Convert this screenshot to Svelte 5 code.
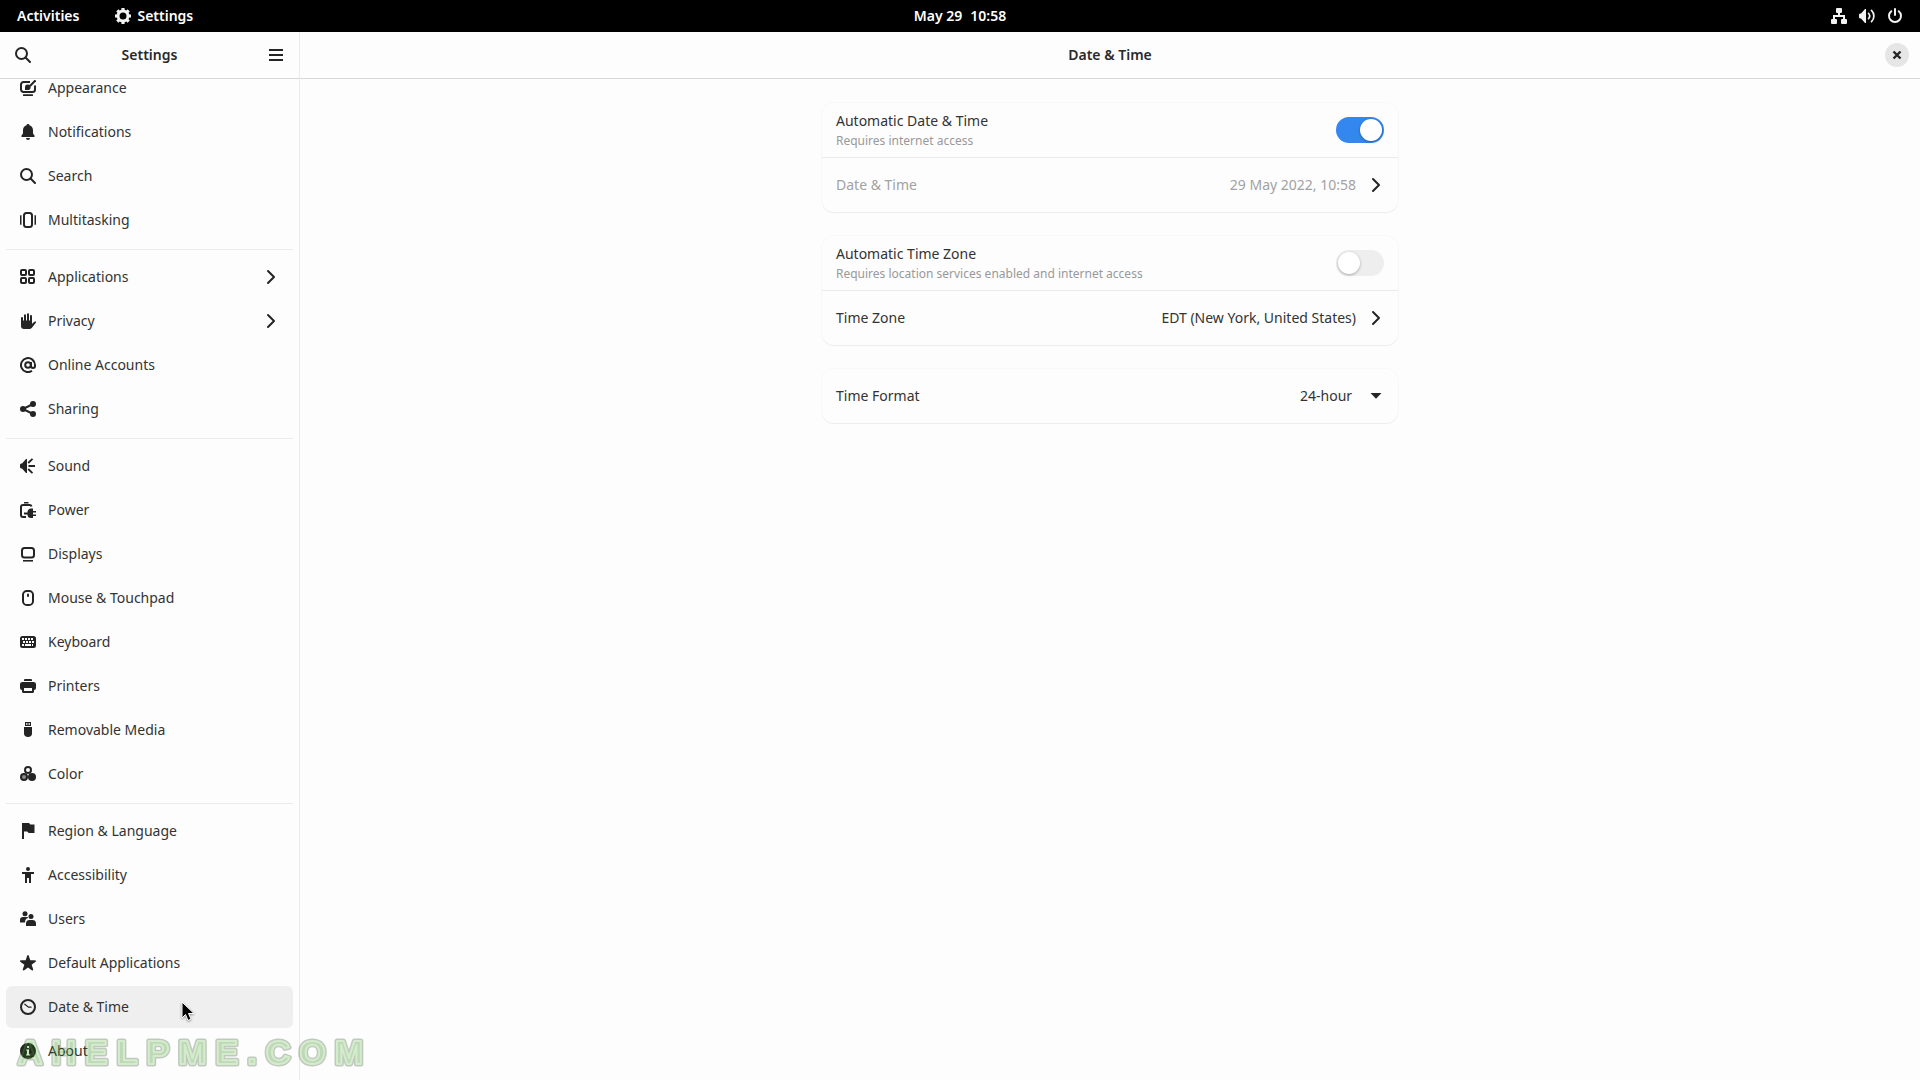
<script lang="ts">
  type Item = { icon: string; label: string; submenu?: boolean };

  const groups: Item[][] = [
    [
      { icon: "appearance", label: "Appearance" },
      { icon: "bell", label: "Notifications" },
      { icon: "search", label: "Search" },
      { icon: "multitasking", label: "Multitasking" },
    ],
    [
      { icon: "apps", label: "Applications", submenu: true },
      { icon: "hand", label: "Privacy", submenu: true },
      { icon: "at", label: "Online Accounts" },
      { icon: "share", label: "Sharing" },
    ],
    [
      { icon: "sound", label: "Sound" },
      { icon: "battery", label: "Power" },
      { icon: "display", label: "Displays" },
      { icon: "mouse", label: "Mouse & Touchpad" },
      { icon: "keyboard", label: "Keyboard" },
      { icon: "printer", label: "Printers" },
      { icon: "usb", label: "Removable Media" },
      { icon: "color", label: "Color" },
    ],
    [
      { icon: "flag", label: "Region & Language" },
      { icon: "accessibility", label: "Accessibility" },
      { icon: "users", label: "Users" },
      { icon: "star", label: "Default Applications" },
      { icon: "clock", label: "Date & Time" },
      { icon: "info", label: "About" },
    ],
  ];

  let selected = $state("Date & Time");
  let autoDate = $state(true);
  let autoZone = $state(false);
  let timeFormat = $state("24-hour");

  const line = 'fill="none" stroke="currentColor"';
  const thick = line + ' stroke-width="2"';

  // 16x16 symbolic icons
  const icons: Record<string, string> = {
    appearance: `<path ${thick} d="M10 2H3.500A2.500 2.500 0 0 0 1 4.500v5A2.500 2.500 0 0 0 3.500 12h9A2.500 2.500 0 0 0 15 9.500V5.500"/><path d="M3.500 14.300h9a.900.900 0 0 1 0 1.700h-9a.900.900 0 0 1 0-1.700zM5 10V7.200A2.800 2.800 0 0 1 10.600 7.200 2.800 2.800 0 0 1 7.800 10z"/><path ${thick} d="M10 6 15.500.300"/>`,
    bell: `<path d="M8 0a1.500 1.500 0 0 0-1.500 1.200C4.400 1.900 3 3.700 3 6v3.500l-1.500 2V13h13v-1.500L13 9.500V6c0-2.300-1.400-4.100-3.500-4.800A1.500 1.500 0 0 0 8 0zM6 14h4a2 2 0 0 1-4 0z"/>`,
    search: `<circle ${thick} cx="6.500" cy="6.500" r="5.500"/><path ${thick} stroke-linecap="round" d="M10.800 10.800 15 15"/>`,
    multitasking: `<rect ${thick} x="4" y="1" width="8" height="14" rx="2.500"/><path d="M0 3.500 1.500 3v10L0 12.500zM16 3.500 14.500 3v10l1.500-.500z"/>`,
    apps: `<g ${thick}><rect x="1" y="1" width="5" height="5" rx="1"/><rect x="9" y="1" width="5" height="5" rx="1"/><rect x="1" y="9" width="5" height="5" rx="1"/><rect x="9" y="9" width="5" height="5" rx="1"/></g>`,
    hand: `<path ${thick} stroke-linecap="round" d="M2 5v7M5 2.300V11M8 1.200V10M11 3v8"/><path d="M1 7.500h11v3.200c1.300-.500 1.500-1.700 3-2.200h1v1l-3.500 4.500c-1 1.400-2 2-3.500 2H4a3 3 0 0 1-3-3z"/>`,
    at: `<circle ${thick} cx="8" cy="8" r="2.800"/><path ${thick} d="M11 5v4a2 2 0 0 0 4 0V8a7 7 0 1 0-3 5.800"/>`,
    share: `<circle cx="13" cy="3" r="3"/><circle cx="3" cy="8" r="3"/><circle cx="13" cy="13" r="3"/><path ${thick} d="m13 3-10 5 10 5"/>`,
    sound: `<path d="M0 6.500 1 5.500h1L6 1h1v14H6l-4-4.500H1l-1-1z"/><path ${line} stroke-width="1.800" d="M8.200 5 12.500.800M8.500 8H15M8.200 11l4.300 4.200"/>`,
    battery: `<path d="M4 0h4.500v1.500H4z"/><path ${thick} d="M11.500 4.500A2 2 0 0 0 9.500 3H3a2 2 0 0 0-2 2v8a2 2 0 0 0 2 2h3"/><path d="M4 10.500h3.500A3.500 3.500 0 0 1 11 6.500h2V9h3v1.500h-3v2h3V14h-3v2h-2a3.500 3.500 0 0 1-3.500-3.500H4z"/>`,
    display: `<rect ${thick} x="2" y="2" width="12" height="9.500" rx="2.500"/><path d="M3 14h10v1.600H3z"/>`,
    mouse: `<rect ${thick} x="3" y="1" width="10" height="14" rx="3.800"/><path ${thick} stroke-linecap="round" d="M8 4.500V6"/>`,
    keyboard: `<path fill-rule="evenodd" d="M2.500 2h11A2.500 2.500 0 0 1 16 4.500v7a2.500 2.500 0 0 1-2.500 2.500h-11A2.500 2.500 0 0 1 0 11.500v-7A2.500 2.500 0 0 1 2.500 2zM2 4v2h2V4zm3 0v2h2V4zm3 0v2h2V4zm3 0v2h2V4zM3 7v2h2V7zm3 0v2h2V7zm3 0v2h2V7zm3 0v2h2V7zM2 10v2h2v-2zm3 0v2h6v-2zm7 0v2h1v-2z"/>`,
    printer: `<path fill-rule="evenodd" d="M5 1h6a1 1 0 0 1 1 1v1H4V2a1 1 0 0 1 1-1zM2.500 4h11A2.500 2.500 0 0 1 16 6.500V10a2 2 0 0 1-2 2v1.500A1.500 1.500 0 0 1 12.500 15h-9A1.500 1.500 0 0 1 2 13.500V12a2 2 0 0 1-2-2V6.500A2.500 2.500 0 0 1 2.500 4zM4 10v3h8v-3z"/>`,
    usb: `<path fill-rule="evenodd" d="M5 0h6v4H5zm1 1.200v1.600h1.500V1.200zm2.500 0v1.600H10V1.200zM4 5h8v6.500c0 2-1.500 3.500-4 3.500s-4-1.500-4-3.500z"/>`,
    color: `<circle ${thick} cx="8" cy="4" r="3"/><circle cx="4" cy="11" r="3" fill="#8a8a8a" stroke="currentColor" stroke-width="2"/><circle cx="12" cy="11" r="4"/>`,
    flag: `<path d="M2 0h7c.500 0 .700 1.500 1.500 1.500h4V10H9c-1 0-1-1.500-2-1.500H4V16H2z"/>`,
    accessibility: `<circle cx="8" cy="2" r="2"/><path d="M2 5h12v2h-3v9H9v-5H7v5H5V7H2z"/>`,
    users: `<circle cx="5" cy="2.700" r="2.500"/><circle cx="11" cy="5.500" r="2.500"/><path d="M0 11.500V9a3 3 0 0 1 3-3h4c.500 0 1 .300 1 1-2 .500-3 2-3 4.500zM6 15v-2.500A3.500 3.500 0 0 1 9.500 9h3a3.500 3.500 0 0 1 3.500 3.500V15z"/>`,
    star: `<path d="M8 0c.600 0 .800.400 2.300 5.300 5.200 0 5.700.100 5.700.700 0 .500-.400.900-4.400 3.700 1.700 4.800 1.800 5.400 1.400 5.700-.500.300-1 .100-5-2.900-4 3-4.500 3.200-5 2.900-.400-.300-.300-.900 1.400-5.700C.400 6.900 0 6.500 0 6c0-.600.500-.700 5.700-.700C7.200.400 7.400 0 8 0z"/>`,
    clock: `<circle ${thick} cx="8" cy="8" r="7"/><path ${line} stroke-width="1.300" stroke-linecap="round" d="m4.800 5.300 3.700 2.900H11"/>`,
    info: `<path fill-rule="evenodd" d="M8 0a8 8 0 1 1 0 16A8 8 0 0 1 8 0zM7 3v2h2V3zM6 6.500v1h1v4H6v1h4v-1H9v-5z"/>`,
    menu: `<path d="M1 2h14v2H1zM1 7h14v2H1zM1 12h14v2H1z"/>`,
    close: `<path ${line} stroke-width="2.400" d="m4.500 4.500 7 7M11.500 4.500l-7 7"/>`,
    next: `<path ${thick} stroke-linecap="round" stroke-linejoin="round" d="m5 2 6 6-6 6"/>`,
    down: `<path d="M2.500 5h11L8 10.800z"/>`,
    gear: `<circle cx="8" cy="8" r="5" ${line} stroke-width="3"/><path ${line} stroke-width="3.200" d="M8 0v3M8 13v3M0 8h3M13 8h3M2.300 2.300l2 2M11.700 11.700l2 2M2.300 13.700l2-2M11.700 4.300l2-2"/>`,
    network: `<path d="M6 0h4a1 1 0 0 1 1 1v3a1 1 0 0 1-1 1H9v2h5v4h1a1 1 0 0 1 1 1v3a1 1 0 0 1-1 1h-4a1 1 0 0 1-1-1v-3a1 1 0 0 1 1-1h1V9H4v2h1a1 1 0 0 1 1 1v3a1 1 0 0 1-1 1H1a1 1 0 0 1-1-1v-3a1 1 0 0 1 1-1h1V7h5V5H6a1 1 0 0 1-1-1V1a1 1 0 0 1 1-1z"/>`,
    volume: `<path d="M0 6.500 1 5.500h1L6 1h1v14H6l-4-4.500H1l-1-1z"/><path ${line} stroke-width="1.700" stroke-linecap="round" d="M9.500 5.300a4 4 0 0 1 0 5.400M12.500 2.300c3.200 3.200 3.200 8.200 0 11.400"/>`,
    shutdown: `<path ${thick} stroke-linecap="round" d="M8 1v6M4.300 3.200a6 6 0 1 0 7.400 0"/>`,
  };
</script>

{#snippet icon(name: string)}
  <svg class="icon" viewBox="0 0 16 16" aria-hidden="true">{@html icons[name]}</svg>
{/snippet}

<div class="desktop">
  <header class="panel">
    <div class="panel-left">
      <button class="panel-button">Activities</button>
      <button class="panel-button">{@render icon("gear")} Settings</button>
    </div>
    <button class="panel-button clock"><span>May 29</span><span>10:58</span></button>
    <button class="panel-button status" aria-label="System menu">
      {@render icon("network")}
      {@render icon("volume")}
      {@render icon("shutdown")}
    </button>
  </header>

  <div class="window">
    <aside class="sidebar">
      <div class="headerbar">
        <button class="flat" aria-label="Search">{@render icon("search")}</button>
        <h1>Settings</h1>
        <button class="flat" aria-label="Menu">{@render icon("menu")}</button>
      </div>
      <nav class="list">
        {#each groups as group, i}
          {#if i > 0}<hr />{/if}
          {#each group as item}
            <a
              href="#{item.icon}"
              class:selected={item.label === selected}
              onclick={() => (selected = item.label)}
            >
              {@render icon(item.icon)}
              <span>{item.label}</span>
              {#if item.submenu}{@render icon("next")}{/if}
            </a>
          {/each}
        {/each}
      </nav>
    </aside>

    <main class="content">
      <div class="headerbar">
        <h2>Date &amp; Time</h2>
        <button class="close" aria-label="Close">{@render icon("close")}</button>
      </div>

      <div class="page">
        <section class="card">
          <label class="row">
            <span class="text two-line">
              <span>Automatic Date &amp; Time</span>
              <small>Requires internet access</small>
            </span>
            <input class="switch" type="checkbox" role="switch" bind:checked={autoDate} />
          </label>
          <button class="row" disabled={autoDate}>
            <span class="text">Date &amp; Time</span>
            <span class="value">29 May 2022, 10:58</span>
            {@render icon("next")}
          </button>
        </section>

        <section class="card">
          <label class="row">
            <span class="text two-line">
              <span>Automatic Time Zone</span>
              <small>Requires location services enabled and internet access</small>
            </span>
            <input class="switch" type="checkbox" role="switch" bind:checked={autoZone} />
          </label>
          <button class="row" disabled={autoZone}>
            <span class="text">Time Zone</span>
            <span class="value">EDT (New York, United States)</span>
            {@render icon("next")}
          </button>
        </section>

        <section class="card">
          <label class="row">
            <span class="text">Time Format</span>
            <select bind:value={timeFormat}>
              <option>24-hour</option>
              <option>AM / PM</option>
            </select>
            {@render icon("down")}
          </label>
        </section>
      </div>
    </main>
  </div>

  <svg class="cursor" viewBox="0 0 14 21" aria-hidden="true">
    <path d="M1 1v16l3.500-3.500L7 19.500l3-1.500-2.500-5.500H13z" />
  </svg>
  <svg class="watermark" aria-hidden="true">
    <g class="mark-outline"><text id="mark" x="4" y="32">AHELPME.COM</text></g>
    <use class="mark-body" href="#mark" />
  </svg>
</div>

<style>
  :global(body) {
    background: #fdfdfd;
  }

  .desktop {
    display: flex;
    flex-direction: column;
    height: 100vh;
    overflow: hidden;
    color: #333;
    font: 14px/20px "Noto Sans", sans-serif;
  }

  button,
  select {
    border: 0;
    padding: 0;
    background: none;
    color: inherit;
    font: inherit;
  }

  .icon {
    flex: none;
    width: 16px;
    height: 16px;
    fill: currentColor;
    color: #242424;
  }

  /* ========== Top panel ========== */
  .panel {
    display: grid;
    grid-template-columns: 1fr auto 1fr;
    flex: none;
    height: 32px;
    padding: 0 17px;
    background: #000;
  }

  .panel-left {
    display: flex;
    gap: 36px;
  }

  .panel-button {
    display: flex;
    align-items: center;
    gap: 6px;
    color: #fff;
    font-weight: 600;
  }

  .panel-button .icon {
    color: #f2f2f2;
  }

  .panel-button.clock {
    gap: 8px;
  }

  .panel-button.status {
    justify-self: end;
    gap: 12px;
  }

  /* ========== Window ========== */
  .window {
    display: flex;
    flex: 1;
    min-height: 0;
  }

  .headerbar {
    display: flex;
    align-items: center;
    justify-content: space-between;
    flex: none;
    box-sizing: border-box;
    height: 47px;
    border-bottom: 1px solid #d8d8d8;
  }

  h1,
  h2 {
    margin: 0;
    color: #2a2a2a;
    font-size: 14px;
    font-weight: 600;
  }

  .sidebar {
    display: flex;
    flex-direction: column;
    flex: none;
    box-sizing: border-box;
    width: 300px;
    border-right: 1px solid #ebebeb;
  }

  .sidebar .headerbar {
    padding: 0 15px;
  }

  .flat {
    display: flex;
  }

  /* scrolled to its end */
  .list {
    display: flex;
    flex-direction: column;
    justify-content: flex-end;
    flex: 1;
    min-height: 0;
    overflow: hidden;
    padding: 0 6px 6px;
  }

  .list a {
    display: flex;
    align-items: center;
    flex: none;
    gap: 12px;
    height: 42px;
    margin-bottom: 2px;
    padding: 0 14px;
    border-radius: 6px;
    color: inherit;
    text-decoration: none;
  }

  .list a span {
    flex: 1;
  }

  .list a.selected {
    background: #efefef;
  }

  .list hr {
    flex: none;
    width: 100%;
    height: 1px;
    margin: 6px 0;
    border: 0;
    background: #ebebeb;
  }

  /* ========== Content ========== */
  .content {
    flex: 1;
    min-width: 0;
  }

  .content .headerbar {
    position: relative;
    justify-content: center;
  }

  .close {
    position: absolute;
    right: 11px;
    display: flex;
    padding: 4px;
    border-radius: 50%;
    background: #e6e6e6;
  }

  .page {
    display: flex;
    flex-direction: column;
    gap: 24px;
    max-width: 576px;
    margin: 24px auto;
  }

  .card {
    border-radius: 12px;
    box-shadow:
      0 0 0 1px rgba(0, 0, 0, 0.02),
      0 1px 1px rgba(0, 0, 0, 0.05);
  }

  .row {
    display: flex;
    align-items: center;
    box-sizing: border-box;
    width: 100%;
    height: 54px;
    padding: 0 14px;
    text-align: left;
  }

  .row + .row {
    height: 55px;
    border-top: 1px solid #ebebeb;
  }

  .text {
    display: flex;
    flex-direction: column;
    flex: 1;
  }

  .text.two-line {
    padding-top: 2px;
  }

  .text small {
    color: #999;
    font-size: 12px;
  }

  .value,
  select {
    margin-right: 12px;
  }

  .row:disabled .text,
  .row:disabled .value {
    color: #a2a2a2;
  }

  select {
    appearance: none;
    outline: 0;
  }

  .switch {
    appearance: none;
    box-sizing: border-box;
    width: 48px;
    height: 26px;
    margin: 0;
    padding: 2px;
    border-radius: 13px;
    background: #eee;
  }

  .switch::before {
    content: "";
    display: block;
    width: 22px;
    height: 22px;
    border-radius: 50%;
    background: #fff;
    box-shadow: 0 1px 3px rgba(0, 0, 0, 0.3);
  }

  .switch:checked {
    background: #3387ee;
  }

  .switch:checked::before {
    margin-left: auto;
  }

  /* ========== Overlays ========== */
  .cursor {
    position: fixed;
    left: 181px;
    top: 1001px;
    width: 14px;
    height: 21px;
    fill: #000;
    stroke: #fff;
    filter: drop-shadow(0 1px 1px rgba(0, 0, 0, 0.4));
    pointer-events: none;
  }

  .watermark {
    position: fixed;
    left: 14px;
    bottom: 8px;
    width: 360px;
    height: 40px;
    font: 700 34px "Liberation Sans", sans-serif;
    letter-spacing: 9px;
    opacity: 0.27;
    pointer-events: none;
  }

  .mark-outline {
    stroke: #1e3e1e;
    stroke-width: 5px;
    stroke-linejoin: round;
  }

  .mark-body {
    fill: #147a00;
    stroke: #6cc04c;
    stroke-width: 2px;
    stroke-linejoin: round;
  }
</style>
